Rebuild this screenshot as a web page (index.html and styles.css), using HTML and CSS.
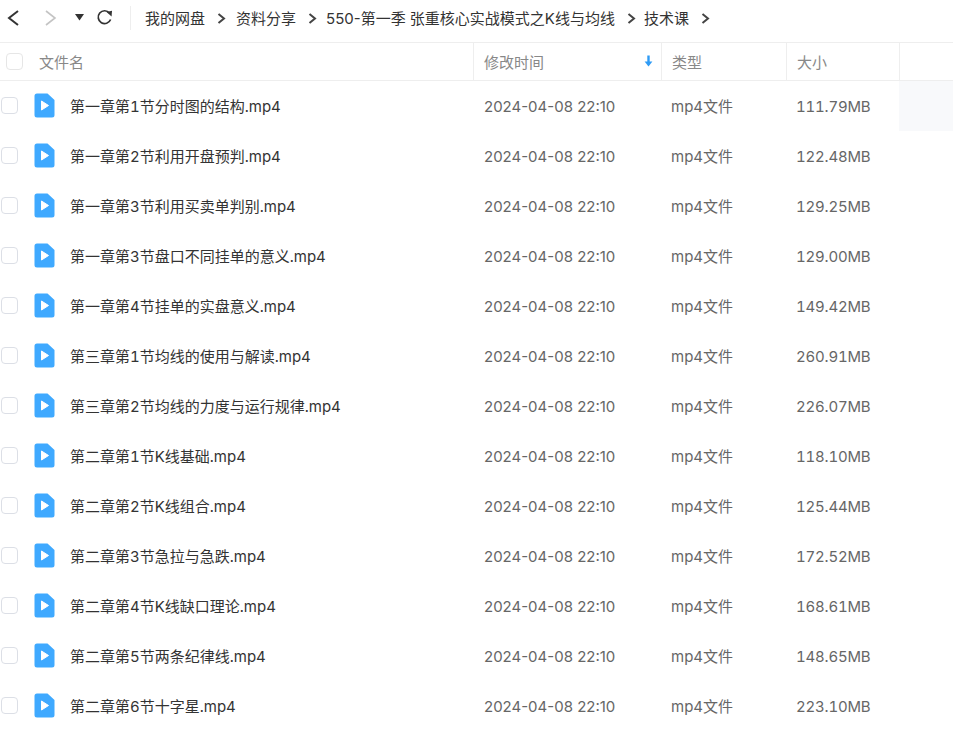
FILE: index.html
```html
<!DOCTYPE html>
<html lang="zh-CN">
<head>
  <meta charset="UTF-8">
  <title>技术课</title>
  <link rel="stylesheet" href="styles.css">
</head>
<body>
  <div class="toolbar">
    <svg class="nav-back" width="16" height="18" viewBox="0 0 16 18"><path d="M13 2 L4 9 L13 16" fill="none" stroke="#333" stroke-width="2"/></svg>
    <svg class="nav-forward" width="16" height="18" viewBox="0 0 16 18"><path d="M3 2 L12 9 L3 16" fill="none" stroke="#c4c4c4" stroke-width="1.6"/></svg>
    <svg class="nav-drop" width="9" height="7" viewBox="0 0 9 7"><path d="M0 0 H9 L4.5 6.5 Z" fill="#333"/></svg>
    <svg class="nav-refresh" width="17" height="17" viewBox="0 0 17 17"><path d="M13.5 4 A6.4 6.4 0 1 0 14.6 10.5" fill="none" stroke="#333" stroke-width="1.7"/><path d="M10.5 3 L16 1.8 L15.6 7.4 Z" fill="#333"/></svg>
    <div class="nav-line"></div>
    <div class="crumbs">
      <span>我的网盘</span><svg class="sep" width="9" height="11" viewBox="0 0 9 11"><path d="M1.5 1 L7 5.5 L1.5 10" fill="none" stroke="#444" stroke-width="2"/></svg>
      <span>资料分享</span><svg class="sep sep-mid" width="9" height="11" viewBox="0 0 9 11"><path d="M1.5 1 L7 5.5 L1.5 10" fill="none" stroke="#444" stroke-width="2"/></svg>
      <span>550-第一季 张重核心实战模式之K线与均线</span><svg class="sep sep-tight" width="9" height="11" viewBox="0 0 9 11"><path d="M1.5 1 L7 5.5 L1.5 10" fill="none" stroke="#444" stroke-width="2"/></svg>
      <span>技术课</span><svg class="sep" width="9" height="11" viewBox="0 0 9 11"><path d="M1.5 1 L7 5.5 L1.5 10" fill="none" stroke="#444" stroke-width="2"/></svg>
    </div>
  </div>

  <div class="head">
    <div class="col-name head-name"><span class="check head-check"></span><span>文件名</span></div>
    <div class="col-time head-cell">修改时间
      <svg class="sort" width="9" height="12" viewBox="0 0 9 12"><path d="M4.5 0.5 V8" stroke="#2f9bf5" stroke-width="2.4"/><path d="M0.6 6.5 H8.4 L4.5 11.5 Z" fill="#2f9bf5"/></svg>
    </div>
    <div class="col-type head-cell">类型</div>
    <div class="col-size head-cell">大小</div>
    <div class="col-rest head-cell"></div>
  </div>

  <div id="rows"></div>

  <script>
    const files = [
      ['第一章第1节分时图的结构.mp4', '111.79MB'],
      ['第一章第2节利用开盘预判.mp4', '122.48MB'],
      ['第一章第3节利用买卖单判别.mp4', '129.25MB'],
      ['第一章第3节盘口不同挂单的意义.mp4', '129.00MB'],
      ['第一章第4节挂单的实盘意义.mp4', '149.42MB'],
      ['第三章第1节均线的使用与解读.mp4', '260.91MB'],
      ['第三章第2节均线的力度与运行规律.mp4', '226.07MB'],
      ['第二章第1节K线基础.mp4', '118.10MB'],
      ['第二章第2节K线组合.mp4', '125.44MB'],
      ['第二章第3节急拉与急跌.mp4', '172.52MB'],
      ['第二章第4节K线缺口理论.mp4', '168.61MB'],
      ['第二章第5节两条纪律线.mp4', '148.65MB'],
      ['第二章第6节十字星.mp4', '223.10MB']
    ];

    const icon = '<svg class="file-icon" width="21" height="25" viewBox="0 0 21 25">' +
      '<path d="M3 0.5 H13.5 L20.5 7 V22 A2.5 2.5 0 0 1 18 24.5 H3 A2.5 2.5 0 0 1 0.5 22 V3 A2.5 2.5 0 0 1 3 0.5 Z" fill="#3fa9ff"/>' +
      '<path d="M7.5 8 L14.5 12.5 L7.5 17 Z" fill="#fff" stroke="#fff" stroke-linejoin="round"/></svg>';

    const rows = document.getElementById('rows');
    files.forEach((f, i) => {
      const row = document.createElement('div');
      row.className = 'row';
      row.innerHTML =
        '<div class="col-name row-name"><span class="check"></span>' + icon + '<span class="name">' + f[0] + '</span></div>' +
        '<div class="col-time cell">2024-04-08 22:10</div>' +
        '<div class="col-type cell">mp4文件</div>' +
        '<div class="col-size cell">' + f[1] + '</div>' +
        '<div class="col-rest' + (i === 0 ? ' hover' : '') + '"></div>';
      rows.appendChild(row);
    });
  </script>
</body>
</html>
```

FILE: styles.css
```css
* {
  box-sizing: border-box;
}
html, body {
  height: 100%;
}
body {
  margin: 0;
  background: #fff;
  overflow: hidden;
  font-family: Inter, "Noto Sans CJK SC", sans-serif;
  font-size: 15px;
}
.toolbar {
  height: 43px;
  display: flex;
  align-items: center;
  border-bottom: 1px solid #eeeeee;
  padding: 0 0 7px 5px;
}
.nav-forward {
  margin-left: 22px;
}
.nav-drop {
  margin-left: 16px;
}
.nav-refresh {
  margin-left: 12px;
}
.nav-line {
  width: 1px;
  height: 24px;
  background: #eeeeee;
  margin-left: 17px;
}
.crumbs {
  display: flex;
  align-items: center;
  margin: -1px 0 0 14px;
  color: #333;
  white-space: nowrap;
}
.sep {
  margin: 2px 10px 0 12px;
}
.sep-mid {
  margin-right: 9px;
}
.sep-tight {
  margin-right: 8px;
}
.head {
  height: 38px;
  display: flex;
  border-bottom: 1px solid #eeeeee;
  color: #888;
}
.col-name {
  width: 473px;
  flex: none;
  display: flex;
  align-items: center;
}
.col-time {
  width: 188px;
  flex: none;
}
.col-type {
  width: 125px;
  flex: none;
}
.col-size {
  width: 113px;
  flex: none;
  font-variant-numeric: tabular-nums;
}
.col-rest {
  flex: 1;
}
.head-cell {
  display: flex;
  align-items: center;
  justify-content: space-between;
  border-left: 1px solid #eeeeee;
  padding: 0 8px 1px 10px;
}
.head-name {
  padding: 0 0 1px 6px;
}
.check {
  width: 17px;
  height: 17px;
  flex: none;
  border: 1px solid #dcdfe6;
  border-radius: 4px;
  background: #fff;
  margin-left: 1px;
}
.head-check {
  margin: 0 16px 0 0;
  border-color: #e6e6e6;
}
.row {
  height: 50px;
  display: flex;
  color: #333;
}
.row-name {
  padding-bottom: 1px;
}
.name {
  font-variant-numeric: tabular-nums;
}
.file-icon {
  flex: none;
  margin: 0 15px 0 16px;
}
.cell {
  display: flex;
  align-items: center;
  padding: 0 0 1px 11px;
  color: #666;
}
.col-time.cell {
  padding-bottom: 0;
}
.col-type.cell {
  padding-left: 10px;
}
.col-size.cell {
  padding: 0 0 0 10px;
  letter-spacing: -0.2px;
}
.col-rest.hover {
  background: #f8f9fb;
}
```
